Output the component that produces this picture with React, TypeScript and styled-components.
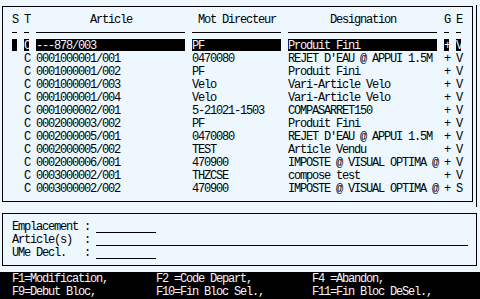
import React, { FunctionComponent } from "react";
import styled, { createGlobalStyle } from "styled-components";

const GlobalStyle = createGlobalStyle`
  html, body {
    margin: 0;
    padding: 0;
    background: #eef6fe;
  }
  body {
    font-family: "Liberation Mono", "DejaVu Sans Mono", monospace;
    font-size: 12px;
    letter-spacing: -1.2px;
    line-height: 13px;
    color: #000;
  }
`;

const Screen = styled.div`
  width: 480px;
  height: 299px;
  display: flex;
  flex-direction: column;
  overflow: hidden;
  white-space: pre;
`;

const TopArea = styled.div`
  height: 208px;
  display: flex;
  align-items: flex-start;
`;

const ListBox = styled.div`
  margin: 6px 0 0 2px;
  width: 471px;
  height: 196px;
  box-sizing: border-box;
  border: 1px solid #000;
  padding: 6px 0 6px 9px;
`;

const Gutter = styled.div`
  margin: 5px 0 0 3px;
  height: 202px;
  border-left: 1px solid #000;
`;

const Row = styled.div`
  display: grid;
  grid-template-columns: 6px 6px 150px 90px 150px 6px 6px;
  column-gap: 6px;
  height: 13px;
`;

const Title = styled.div<{ $center?: boolean }>`
  padding-top: 1px;
  text-align: ${(p) => (p.$center ? "center" : "left")};
`;

const Rule = styled.div`
  margin-top: 6px;
  height: 1px;
  width: calc(100% - 1px);
  background: #000;
`;

const Cell = styled.div<{ $on?: boolean }>`
  box-sizing: border-box;
  height: 12px;
  padding-top: 1px;
  line-height: 12px;
  background: ${(p) => (p.$on ? "#000" : "transparent")};
  color: ${(p) => (p.$on ? "#eef6fe" : "#000")};
  width: ${(p) => (p.$on ? "calc(100% - 1px)" : "auto")};
`;

const FormBox = styled.div`
  margin: 6px 0 6px 2px;
  width: 475px;
  height: 53px;
  box-sizing: border-box;
  border: 1px solid #000;
  padding: 6px 0 0 9px;
`;

const FormLine = styled.div`
  height: 13px;
  display: flex;
  align-items: flex-start;
`;

const Label = styled.span`
  padding-top: 1px;
  line-height: 12px;
`;

const Field = styled.span<{ $cols: number }>`
  display: inline-block;
  margin-left: 6px;
  width: ${(p) => p.$cols * 6}px;
  height: 12px;
  border-bottom: 1px solid #000;
`;

const KeyBar = styled.div`
  flex: 1;
  background: #000;
  color: #eef6fe;
  padding: 1px 0 0 12px;
  display: grid;
  grid-template-columns: 144px 156px 1fr;
  grid-auto-rows: 13px;
`;

type Line = [string, string, string, string, string, string];

const lines: Line[] = [
  ["C", "---878/003", "PF", "Produit Fini", "+", "V"],
  ["C", "0001000001/001", "0470080", "REJET D'EAU @ APPUI 1.5M", "+", "V"],
  ["C", "0001000001/002", "PF", "Produit Fini", "+", "V"],
  ["C", "0001000001/003", "Velo", "Vari-Article Velo", "+", "V"],
  ["C", "0001000001/004", "Velo", "Vari-Article Velo", "+", "V"],
  ["C", "0001000002/001", "5-21021-1503", "COMPASARRET150", "+", "V"],
  ["C", "0002000003/002", "PF", "Produit Fini", "+", "V"],
  ["C", "0002000005/001", "0470080", "REJET D'EAU @ APPUI 1.5M", "+", "V"],
  ["C", "0002000005/002", "TEST", "Article Vendu", "+", "V"],
  ["C", "0002000006/001", "470900", "IMPOSTE @ VISUAL OPTIMA @", "+", "V"],
  ["C", "0003000002/001", "THZCSE", "compose test", "+", "V"],
  ["C", "0003000002/002", "470900", "IMPOSTE @ VISUAL OPTIMA @", "+", "S"],
];

const keys = [
  "F1=Modification,",
  "F2 =Code Depart,",
  "F4 =Abandon,",
  "F9=Debut Bloc,",
  "F10=Fin Bloc Sel.,",
  "F11=Fin Bloc DeSel.,",
];

const App: FunctionComponent = () => {
  return (
    <Screen>
      <GlobalStyle />
      <TopArea>
        <ListBox>
          <Row>
            <Title>S</Title>
            <Title>T</Title>
            <Title $center>Article</Title>
            <Title $center>Mot Directeur</Title>
            <Title $center>Designation</Title>
            <Title>G</Title>
            <Title>E</Title>
          </Row>
          <Row>
            {Array.from({ length: 7 }).map((_, i) => (
              <Rule key={i} />
            ))}
          </Row>
          {lines.map((l, i) => (
            <Row key={i}>
              <Cell $on={i === 0} />
              {l.map((v, j) => (
                <Cell key={j} $on={i === 0}>
                  {v}
                </Cell>
              ))}
            </Row>
          ))}
        </ListBox>
        <Gutter />
      </TopArea>

      <FormBox>
        <FormLine>
          <Label>Emplacement :</Label>
          <Field $cols={10} />
        </FormLine>
        <FormLine>
          <Label>Article(s)  :</Label>
          <Field $cols={62} />
        </FormLine>
        <FormLine>
          <Label>UMe Decl.   :</Label>
          <Field $cols={10} />
        </FormLine>
      </FormBox>

      <KeyBar>
        {keys.map((k) => (
          <span key={k}>{k}</span>
        ))}
      </KeyBar>
    </Screen>
  );
};

export default App;
